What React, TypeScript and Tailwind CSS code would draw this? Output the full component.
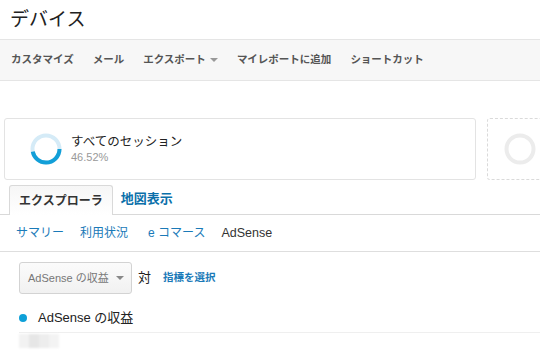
import React from "react";

const JP = "font-['Liberation_Sans','Noto_Sans_CJK_JP',sans-serif]";

const toolbarItems = ["カスタマイズ", "メール", "エクスポート", "マイレポートに追加", "ショートカット"];

const Donut: React.FC<{ pct: number; track: string; fill: string }> = ({ pct, track, fill }) => {
  const r = 13.5;
  const c = 2 * Math.PI * r;
  return (
    <svg width="32" height="32" viewBox="0 0 32 32">
      <circle cx="16" cy="16" r={r} fill="none" stroke={track} strokeWidth="4" />
      {pct > 0 && (
        <circle
          cx="16"
          cy="16"
          r={r}
          fill="none"
          stroke={fill}
          strokeWidth="4"
          strokeDasharray={`${(c * pct) / 100} ${c}`}
        />
      )}
    </svg>
  );
};

export default function App() {
  return (
    <div className={`w-[540px] h-[360px] overflow-hidden bg-white text-[#222] ${JP}`}>
      <div className="h-[39px] pl-[10px] flex items-center text-[19px] leading-none">デバイス</div>

      {/* toolbar */}
      <div className="h-[42px] border-y border-[#e5e5e5] bg-[#f7f7f7] flex items-center pl-[11px] gap-[19px] text-[10.5px] font-bold text-[#555]">
        {toolbarItems.map((t) => (
          <div key={t} className="flex items-center">
            <span>{t}</span>
            {t === "エクスポート" && (
              <span className="ml-[4px] w-0 h-0 border-x-[4px] border-x-transparent border-t-[4px] border-t-[#999]" />
            )}
          </div>
        ))}
      </div>

      <div className="h-[37px]" />

      {/* segment cards */}
      <div className="flex gap-[11px] pl-[4px]">
        <div className="w-[472px] h-[62px] shrink-0 border border-[#e3e3e3] rounded-[3px] flex items-center pl-[25px] gap-[9px]">
          <Donut pct={46.52} track="#d5ebf7" fill="#129fd8" />
          <div className="flex flex-col">
            <span className="text-[12.5px] leading-[16px]">すべてのセッション</span>
            <span className="text-[11px] leading-[14px] text-[#999]">46.52%</span>
          </div>
        </div>
        <div className="w-[60px] h-[62px] shrink-0 border border-dashed border-[#dadada] rounded-[3px] flex items-center pl-[16px]">
          <Donut pct={0} track="#ececec" fill="#ececec" />
        </div>
      </div>

      {/* tabs */}
      <div className="mt-[5px] h-[30px] border-b border-[#d9d9d9] flex items-end pl-[9px]">
        <div className="h-[30px] -mb-px px-[9px] flex items-center border border-b-0 border-[#d9d9d9] rounded-t-[3px] bg-gradient-to-b from-[#f6f6f6] to-white text-[12px] font-bold text-[#333]">
          エクスプローラ
        </div>
        <div className="h-[30px] ml-[8px] flex items-center text-[13px] font-bold text-[#0b70aa]">地図表示</div>
      </div>

      {/* sub navigation */}
      <div className="h-[37px] border-b border-[#dedede] flex items-center pl-[16px] text-[12px] text-[#1a7ab8]">
        <span>サマリー</span>
        <span className="ml-[16px]">利用状況</span>
        <span className="ml-[20px]">e コマース</span>
        <span className="ml-[16px] text-[12.5px] text-[#333]">AdSense</span>
      </div>

      {/* metric selector */}
      <div className="mt-[10px] pl-[19px] flex items-center">
        <div className="w-[113px] h-[32px] border border-[#d3d3d3] rounded-[3px] bg-gradient-to-b from-[#fbfbfb] to-[#f1f1f1] flex items-center pl-[8px] pr-[7px] text-[11px] text-[#777]">
          <span className="flex-1">AdSense の収益</span>
          <span className="w-0 h-0 border-x-[4px] border-x-transparent border-t-[4px] border-t-[#888]" />
        </div>
        <span className="ml-[6px] text-[13px] text-[#222]">対</span>
        <span className="ml-[12px] text-[10.5px] font-bold text-[#1a7ab8]">指標を選択</span>
      </div>

      {/* legend */}
      <div className="mt-[17px] pl-[19px] flex items-center h-[14px]">
        <span className="w-[8px] h-[8px] rounded-full bg-[#0ea0d8]" />
        <span className="ml-[11px] text-[13px] text-[#222]">AdSense の収益</span>
      </div>
      <div className="ml-[19px] mt-[7px] border-t border-[#efefef]" />
      <div className="ml-[19px] mt-[1px] w-[40px] h-[14px] bg-[#eeeeee] blur-[1px] flex">
        <span className="w-[10px] bg-[#f2f2f2]" />
        <span className="w-[10px] bg-[#e6e6e6]" />
        <span className="w-[10px] bg-[#ededed]" />
        <span className="w-[10px] bg-[#f3f3f3]" />
      </div>
    </div>
  );
}
